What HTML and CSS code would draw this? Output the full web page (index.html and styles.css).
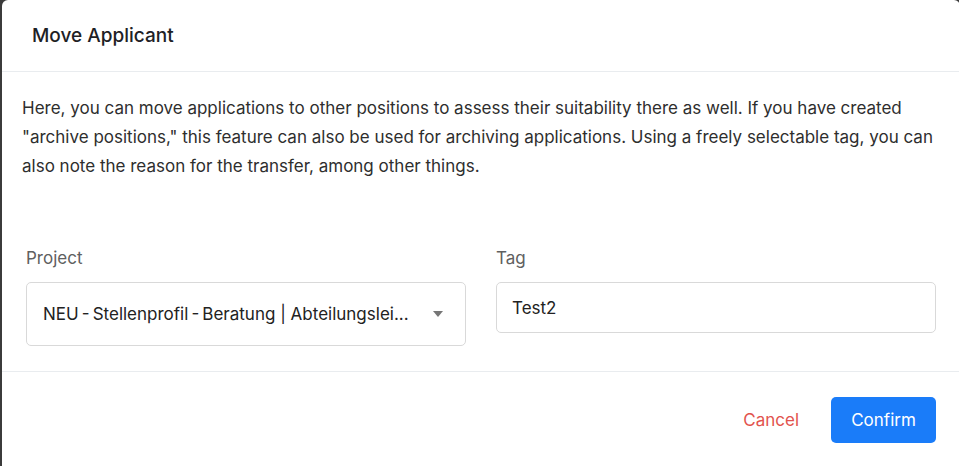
FILE: index.html
```html
<!DOCTYPE html>
<html lang="en">
<head>
<meta charset="utf-8">
<title>Move Applicant</title>
<link rel="stylesheet" href="styles.css">
</head>
<body>
<div class="modal">
  <header class="modal-header">
    <h1 class="modal-title">Move Applicant</h1>
  </header>
  <div class="modal-body">
    <p class="intro">Here, you can move applications to other positions to assess their suitability there as well. If you have created "archive positions," this feature can also be used for archiving applications. Using a freely selectable tag, you can also note the reason for the transfer, among other things.</p>
    <div class="form-row">
      <div class="field">
        <label class="field-label">Project</label>
        <div class="select">
          <span class="select-value">NEU&#8201;-&#8201;Stellenprofil&#8201;-&#8201;Beratung | Abteilungslei...</span>
          <span class="caret"></span>
        </div>
      </div>
      <div class="field">
        <label class="field-label">Tag</label>
        <div class="input">Test2</div>
      </div>
    </div>
  </div>
  <footer class="modal-footer">
    <button class="btn btn-cancel">Cancel</button>
    <button class="btn btn-confirm">Confirm</button>
  </footer>
</div>
</body>
</html>
```
FILE: styles.css
```css
html, body {
  margin: 0;
  padding: 0;
  background: #3b3b3b;
  height: 100%;
  overflow: hidden;
}
body {
  font-family: "Inter", "Noto Sans", sans-serif;
  color: #222;
}
.modal {
  margin-left: 2px;
  width: 958px;
  height: 480px;
  background: #fff;
  border-radius: 6px;
  display: flex;
  flex-direction: column;
}
.modal-header {
  height: 71px;
  border-bottom: 1px solid #e9ecef;
  display: flex;
  align-items: center;
  padding: 0 30px;
}
.modal-title {
  margin: 0;
  font-size: 19px;
  font-weight: 500;
  color: #1e2125;
}
.modal-body {
  padding: 22px 20px 0;
}
.intro {
  margin: 0;
  font-size: 17px;
  line-height: 29px;
  color: #2e2e2e;
}
.form-row {
  margin-top: 65px;
  display: grid;
  grid-template-columns: 440px 440px;
  column-gap: 30px;
  align-items: start;
  padding: 0 24px 25px;
  border-bottom: 1px solid #e9ecef;
  margin-left: -20px;
  margin-right: -20px;
}
.field {
  display: flex;
  flex-direction: column;
}
.field-label {
  font-size: 17px;
  line-height: 24px;
  color: #606060;
  margin-bottom: 12px;
}
.select, .input {
  box-sizing: border-box;
  border: 1px solid #d9d9d9;
  border-radius: 5px;
  font-size: 17px;
  color: #222;
  display: flex;
  align-items: center;
}
.select {
  height: 64px;
  padding: 0 22px 0 16px;
}
.select-value {
  white-space: nowrap;
}
.caret {
  margin-left: auto;
  width: 0;
  height: 0;
  border-left: 5px solid transparent;
  border-right: 5px solid transparent;
  border-top: 6px solid #767676;
}
.input {
  height: 51px;
  padding: 0 15px;
}
.modal-footer {
  display: flex;
  justify-content: flex-end;
  align-items: center;
  gap: 16px;
  padding: 25px 24px;
}
.btn {
  font-family: inherit;
  font-size: 17px;
  border: 0;
  border-radius: 5px;
  height: 46px;
  cursor: pointer;
}
.btn-cancel {
  background: transparent;
  color: #e2534e;
  padding: 0 16px;
}
.btn-confirm {
  background: #1a7cf9;
  color: #fff;
  width: 105px;
}
```
